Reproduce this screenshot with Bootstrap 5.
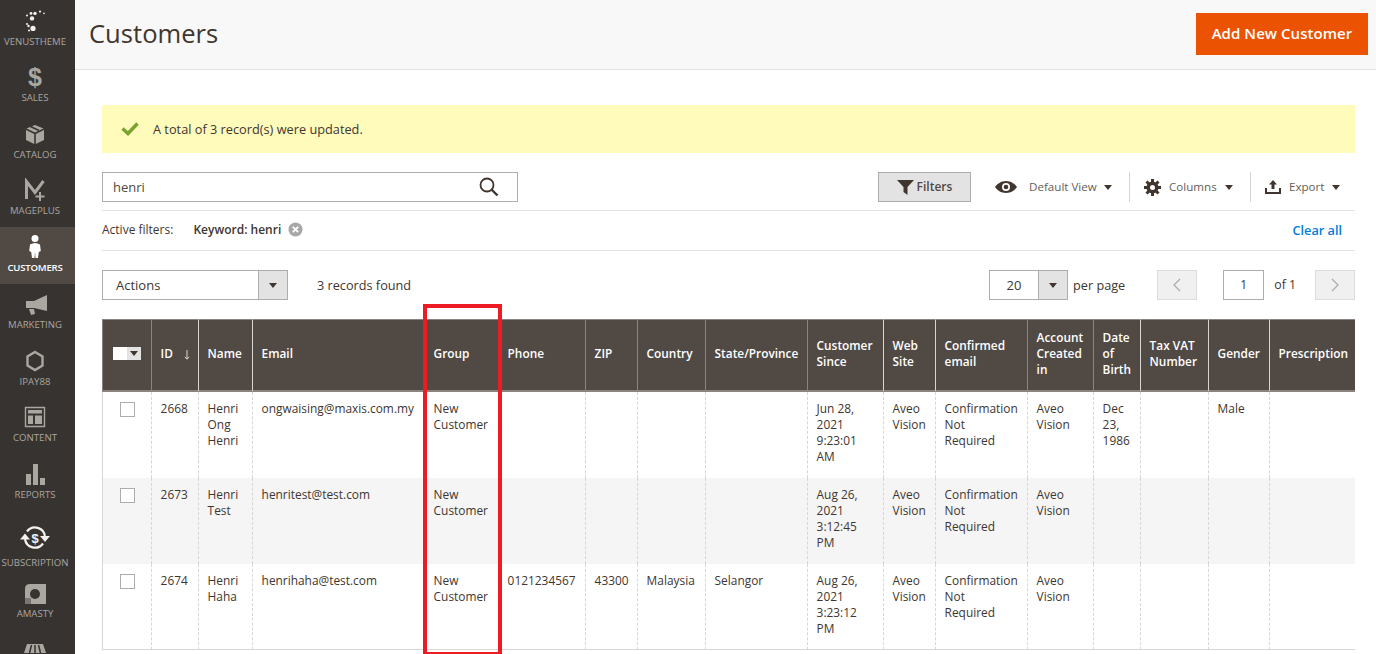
<!DOCTYPE html>
<html lang="en">
<head>
<meta charset="utf-8">
<title>Customers</title>
<link href="https://cdn.jsdelivr.net/npm/bootstrap@5.3.0/dist/css/bootstrap.min.css" rel="stylesheet">
<style>
html,body{height:654px;overflow:hidden}
body{font-family:"Open Sans",sans-serif;font-size:12px;line-height:16px;color:#41362f;background:#fff}
.shell{height:654px;position:relative;overflow:hidden}
.side{width:75px;background:#373330;height:654px;overflow:hidden;padding-top:.6px}
.side-item{height:56.6px;color:#aaa6a0;font-size:9.6px;line-height:12px;text-align:center;white-space:nowrap;padding:8px 5px 0 0}
.side-item svg{display:block;margin:0 auto 3px;height:24px;width:30px}
.side-item.dn1{padding-top:9px}
.side-item.on{background:#514943;color:#fff;font-weight:600;letter-spacing:-.2px}
.side-item .dollar{display:block;font:700 25px/24px "Liberation Sans",sans-serif;color:#aaa6a0;margin-bottom:3px}
.side-item.sub{height:67px;padding-top:14px}
.side-item.sub svg{height:30px;width:36px;margin-bottom:3px}
.side-item.ama{height:50px;padding-top:7px}
.side-item.ama svg{height:20px;margin-bottom:4px}
.side-item.last{padding-top:17px}
.main{min-width:0}
.topbar{height:70px;background:#f8f8f8;border-bottom:1px solid #e3e3e3;padding:0 8px 2px 14px}
.topbar h1{font-size:25.6px;font-weight:400;margin:0;color:#41362f;line-height:34px}
.add-btn{background:#eb5202;color:#fff;border:1px solid #eb5202;border-radius:0;font-size:15px;font-weight:600;height:42px;width:172px;padding:0;letter-spacing:.05px}
.body-wrap{padding:35px 21px 0 27px}
.msg{height:48px;background:#fffbbb;padding-left:19px;gap:14px;font-size:12.75px}
.search-row{height:39px;margin-top:19px;border-bottom:1px solid #e3e3e3;align-items:flex-start}
.search-box{width:416px;height:30px;border:1px solid #adadad;padding:0 18px 0 10px;font-size:13px;color:#514943}
.filter-btn{width:93px;height:30px;background:#e3e3e3;border:1px solid #adadad;border-radius:0;color:#514943;font-size:12px;font-weight:600;padding:0;gap:3px}
.tool{height:30px;color:#676056;font-size:11.6px}
.tool-sep{border-left:1px solid #d4d4d4}
.caret{width:0;height:0;border-left:4px solid transparent;border-right:4px solid transparent;border-top:5px solid #41362f;display:inline-block}
.active-row{height:40px;border-bottom:1px solid #e3e3e3;padding:0 13px 2px 0}
.kw{font-weight:600;margin-left:20px;margin-right:7px}
.clr{color:#007bdb;font-weight:600;font-size:12.7px;text-decoration:none}
.act-row{height:30px;margin-top:19px}
.sel{height:30px;border:1px solid #adadad;background:#fff}
.sel-arrow{background:#e3e3e3;border-left:1px solid #adadad;width:29px;height:100%}
.pg-btn{width:40px;height:30px;background:#f0f0f0;border:1px solid #dcdcdc;border-radius:0;padding:0}
.pg-input{width:41px;height:30px;border:1px solid #adadad;text-align:center;line-height:28px}
.tbl-wrap{margin-top:19px;overflow:hidden;width:1253px}
table.grid-tbl{table-layout:fixed;width:1282px;margin:0;border-collapse:separate;border-spacing:0;color:#41362f}
.grid-tbl>thead>tr>th{background:#514943;color:#fff;font-weight:600;font-size:11.85px;line-height:16px;padding:0 2px 4px 8.600px;height:73px;vertical-align:middle;border:0;border-top:1px solid #8a837f;border-bottom:2px solid #8a837f;border-left:1px solid #8a837f;box-shadow:none}
.grid-tbl>thead>tr>th.wl{border-left-color:#d8d4d1}
.grid-tbl>tbody>tr>td{padding:8px 9px 0 8.600px;vertical-align:top;border:0;border-left:1px dashed #d6d6d6;height:86px;background:transparent;box-shadow:none;font-size:11.9px;line-height:16px;color:#41362f}
.grid-tbl>tbody>tr.alt>td{background:#f5f5f5}
.grid-tbl>tbody>tr:last-child>td{border-bottom:1px solid #d6d6d6}
.grid-tbl>tbody>tr>td:first-child{border-left:1px solid #d6d6d6;padding-left:17px}
.grid-tbl>thead>tr>th:first-child{padding-left:10px}
.cb{width:15px;height:15px;border:1px solid #adadad;background:#fff;display:block;margin-top:2px}
.hd-cb{width:28px;height:13px;background:#e3e3e3;margin-top:1px}
.hd-cb i{display:block;width:14px;height:13px;background:#fff}
.redbox{position:absolute;left:423px;top:304px;width:79px;height:352px;border:4px solid #ed1c24;pointer-events:none}
</style>
</head>
<body>
<div class="shell d-flex">
<nav class="side flex-shrink-0">
  <div class="side-item"><svg viewBox="0 0 30 24"><g fill="#f4f2ef"><circle cx="7" cy="6.400" r="1"/><circle cx="11" cy="4.400" r="1.400"/><circle cx="15" cy="4.400" r="1.700"/><circle cx="20" cy="2.600" r="1.100"/><circle cx="24" cy="4.400" r=".8"/><circle cx="12" cy="9.400" r="2.200"/><circle cx="7" cy="15" r="1"/><circle cx="8.500" cy="17" r="1.200"/><circle cx="13" cy="19.400" r="2.600"/><circle cx="9" cy="21.600" r="1"/></g></svg>VENUSTHEME</div>
  <div class="side-item"><span class="dollar">$</span>SALES</div>
  <div class="side-item"><svg viewBox="0 0 30 24"><path fill="#aaa6a0" d="M15 3l8.500 3.500L15 10.500 6.500 6.500zM6 8l8.200 4v10L6 18zM24 8l-8.200 4v10L24 18z"/><path stroke="#373330" stroke-width="1.500" d="M10.500 4.500l8.500 4"/></svg>CATALOG</div>
  <div class="side-item"><svg viewBox="0 0 30 24"><path fill="none" stroke="#aaa6a0" stroke-width="3" d="M6.500 21V3.500l8.500 11L23.500 3"/><path stroke="#aaa6a0" stroke-width="2" d="M20 14v9M15.500 18.500h9"/></svg>MAGEPLUS</div>
  <div class="side-item on"><svg viewBox="0 0 30 24"><circle cx="15" cy="3.500" r="3.500" fill="#fff"/><path fill="#fff" d="M10 9.500q5-3 10 0l.8 6.500-2 1-.8 6h-2.500l-.5-6-.5 6H12l-.8-6-2-1z"/></svg>CUSTOMERS</div>
  <div class="side-item"><svg viewBox="0 0 30 24"><path fill="#aaa6a0" d="M27 3v16l-13-3H6V9h8z"/><path fill="#aaa6a0" d="M9 17h5l1 5-4 1z"/></svg>MARKETING</div>
  <div class="side-item dn1"><svg viewBox="0 0 30 24"><path fill="none" stroke="#aaa6a0" stroke-width="2.400" d="M15 3l7.500 4.500v9L15 21l-7.500-4.500v-9z"/></svg>IPAY88</div>
  <div class="side-item"><svg viewBox="0 0 30 24"><path fill="none" stroke="#aaa6a0" stroke-width="1.400" d="M5.500 2.500h19v19h-19z"/><path fill="#aaa6a0" d="M8 5h14v3.500H8zM8 10.500h5V19H8zM15 10.500h7V19h-7z"/></svg>CONTENT</div>
  <div class="side-item dn1"><svg viewBox="0 0 30 24"><path fill="#aaa6a0" d="M6 12h5v11H6zM13 2h5v21h-5zM20 16h5v7h-5z"/></svg>REPORTS</div>
  <div class="side-item sub"><svg viewBox="0 0 36 30"><g fill="none" stroke="#f4f2ef" stroke-width="2.200"><path d="M28 13A10 10 0 0 0 10 7.500"/><path d="M8 15A10 10 0 0 0 26 19.500"/></g><path fill="#f4f2ef" d="M3 15.500h10L8 9.500zM23 12h10l-5 6z"/><text x="18" y="18.500" text-anchor="middle" font-family="Liberation Sans" font-weight="700" font-size="13" fill="#f4f2ef">$</text></svg>SUBSCRIPTION</div>
  <div class="side-item ama"><svg viewBox="0 0 30 20"><path fill="#aaa6a0" d="M10 0h16v20H5V5q0-5 5-5z"/><circle cx="15" cy="10" r="5" fill="#373330"/><path fill="#777" d="M5 14h6v6H5z"/></svg>AMASTY</div>
  <div class="side-item last"><svg viewBox="0 0 30 24"><path fill="#aaa6a0" d="M7 0h16l3 9H4z"/><path stroke="#373330" stroke-width="1.500" d="M11.500 1l-2 8M15 1v8M18.500 1l2 8"/></svg></div>
</nav>
<div class="main flex-grow-1">
  <header class="topbar d-flex align-items-center justify-content-between">
    <h1>Customers</h1>
    <button class="btn add-btn" type="button">Add New Customer</button>
  </header>
  <div class="body-wrap">
    <div class="msg d-flex align-items-center">
      <svg width="18" height="14" viewBox="0 0 18 14"><path fill="none" stroke="#79a22e" stroke-width="3.400" d="M1.500 6.500l5.500 5L16.500 1.500"/></svg>
      <span>A total of 3 record(s) were updated.</span>
    </div>
    <div class="search-row d-flex justify-content-between">
      <div class="search-box d-flex align-items-center justify-content-between"><span>henri</span>
        <svg width="20" height="20" viewBox="0 0 20 20"><circle cx="8" cy="8" r="6.500" fill="none" stroke="#41362f" stroke-width="1.800"/><path stroke="#41362f" stroke-width="2.400" d="M12.500 12.500l6 6"/></svg>
      </div>
      <div class="d-flex align-items-center" style="height:30px">
        <button class="btn filter-btn d-flex align-items-center justify-content-center" type="button"><svg width="17" height="15" viewBox="0 0 17 15"><path fill="#41362f" d="M0 0h17l-6.500 7v8l-4-3V7z"/></svg>Filters</button>
        <div class="tool d-flex align-items-center" style="margin-left:24px;width:134px"><svg width="22" height="12" viewBox="0 0 22 12"><path fill="#41362f" d="M11 0c5 0 9 3 11 6-2 3-6 6-11 6S2 9 0 6c2-3 6-6 11-6z"/><circle cx="11" cy="6" r="4" fill="#fff"/><circle cx="11" cy="6" r="2.300" fill="#41362f"/></svg><span style="margin-left:12px">Default View</span><i class="caret" style="margin-left:7px"></i></div>
        <div class="tool tool-sep d-flex align-items-center" style="width:121px;padding-left:14px"><svg width="17" height="17" viewBox="0 0 17 17"><path fill="none" stroke="#41362f" stroke-width="3" d="M8.500 0v17M0 8.500h17M2.500 2.500l12 12M14.500 2.500l-12 12"/><circle cx="8.500" cy="8.500" r="6" fill="#41362f"/><circle cx="8.500" cy="8.500" r="2.500" fill="#fff"/></svg><span style="margin-left:8px">Columns</span><i class="caret" style="margin-left:8px"></i></div>
        <div class="tool tool-sep d-flex align-items-center" style="width:105px;padding-left:14px"><svg width="16" height="14" viewBox="0 0 16 14"><path fill="#41362f" d="M8 0l4 4.500H9.500V9h-3V4.500H4zM0 8h2v4h12V8h2v6H0z"/></svg><span style="margin-left:8px">Export</span><i class="caret" style="margin-left:8px"></i></div>
      </div>
    </div>
    <div class="active-row d-flex align-items-center">
      <span>Active filters:</span><span class="kw">Keyword: henri</span>
      <svg width="15" height="15" viewBox="0 0 15 15"><circle cx="7.500" cy="7.500" r="7" fill="#a7a7a7"/><path stroke="#fff" stroke-width="1.800" d="M4.800 4.800l5.400 5.400M10.200 4.800l-5.400 5.400"/></svg>
      <a class="clr ms-auto" href="#">Clear all</a>
    </div>
    <div class="act-row d-flex align-items-center">
      <div class="sel d-flex align-items-center justify-content-between" style="width:186px;padding-left:13px"><span style="font-size:13px">Actions</span><span class="sel-arrow d-flex align-items-center justify-content-center"><i class="caret"></i></span></div>
      <span style="margin-left:29px;font-size:12.7px">3 records found</span>
      <div class="sel d-flex align-items-center ms-auto" style="width:79px"><span class="flex-grow-1 text-center" style="font-size:13px">20</span><span class="sel-arrow d-flex align-items-center justify-content-center"><i class="caret"></i></span></div>
      <span style="margin-left:5px;margin-right:32px;font-size:12.7px">per page</span>
      <button class="btn pg-btn d-flex align-items-center justify-content-center" type="button"><svg width="8" height="14" viewBox="0 0 8 14"><path fill="none" stroke="#adadad" stroke-width="1.300" d="M7 1L1 7l6 6"/></svg></button>
      <div class="pg-input" style="margin-left:26px">1</div>
      <span style="margin-left:10px;margin-right:19px;font-size:12.3px">of 1</span>
      <button class="btn pg-btn d-flex align-items-center justify-content-center" type="button"><svg width="8" height="14" viewBox="0 0 8 14"><path fill="none" stroke="#adadad" stroke-width="1.300" d="M1 1l6 6-6 6"/></svg></button>
    </div>
    <div class="tbl-wrap">
      <table class="table grid-tbl">
        <colgroup><col style="width:49px"><col style="width:47px"><col style="width:54px"><col style="width:172px"><col style="width:74px"><col style="width:87px"><col style="width:52px"><col style="width:68px"><col style="width:102px"><col style="width:76px"><col style="width:52px"><col style="width:92px"><col style="width:66px"><col style="width:47px"><col style="width:68px"><col style="width:61px"><col style="width:115px"></colgroup>
        <thead><tr>
          <th><div class="hd-cb d-flex align-items-center justify-content-between"><i></i><span class="caret" style="margin-right:3px"></span></div></th>
          <th class="text-nowrap">ID <svg class="ms-2" width="6" height="10" viewBox="0 0 6 10"><path fill="none" stroke="#dcd9d6" d="M3 0v9M.8 6.800L3 9.200l2.200-2.400"/></svg></th><th class="wl">Name</th><th class="wl">Email</th><th>Group</th><th>Phone</th><th>ZIP</th><th>Country</th><th class="text-nowrap">State/Province</th><th>Customer Since</th><th class="wl">Web Site</th><th class="wl">Confirmed email</th><th>Account Created in</th><th>Date of Birth</th><th class="wl">Tax VAT Number</th><th class="wl">Gender</th><th class="wl">Prescription</th>
        </tr></thead>
        <tbody>
          <tr><td><span class="cb"></span></td><td>2668</td><td>Henri Ong Henri</td><td>ongwaising@maxis.com.my</td><td>New Customer</td><td></td><td></td><td></td><td></td><td>Jun 28, 2021 9:23:01 AM</td><td>Aveo Vision</td><td>Confirmation Not Required</td><td>Aveo Vision</td><td>Dec 23, 1986</td><td></td><td>Male</td><td></td></tr>
          <tr class="alt"><td><span class="cb"></span></td><td>2673</td><td>Henri Test</td><td>henritest@test.com</td><td>New Customer</td><td></td><td></td><td></td><td></td><td>Aug 26, 2021 3:12:45 PM</td><td>Aveo Vision</td><td>Confirmation Not Required</td><td>Aveo Vision</td><td></td><td></td><td></td><td></td></tr>
          <tr><td><span class="cb"></span></td><td>2674</td><td>Henri Haha</td><td>henrihaha@test.com</td><td>New Customer</td><td>0121234567</td><td>43300</td><td>Malaysia</td><td>Selangor</td><td>Aug 26, 2021 3:23:12 PM</td><td>Aveo Vision</td><td>Confirmation Not Required</td><td>Aveo Vision</td><td></td><td></td><td></td><td></td></tr>
        </tbody>
      </table>
    </div>
  </div>
</div>
<div class="redbox"></div>
</div>
<script src="https://cdn.jsdelivr.net/npm/bootstrap@5.3.0/dist/js/bootstrap.bundle.min.js"></script>
</body>
</html>
